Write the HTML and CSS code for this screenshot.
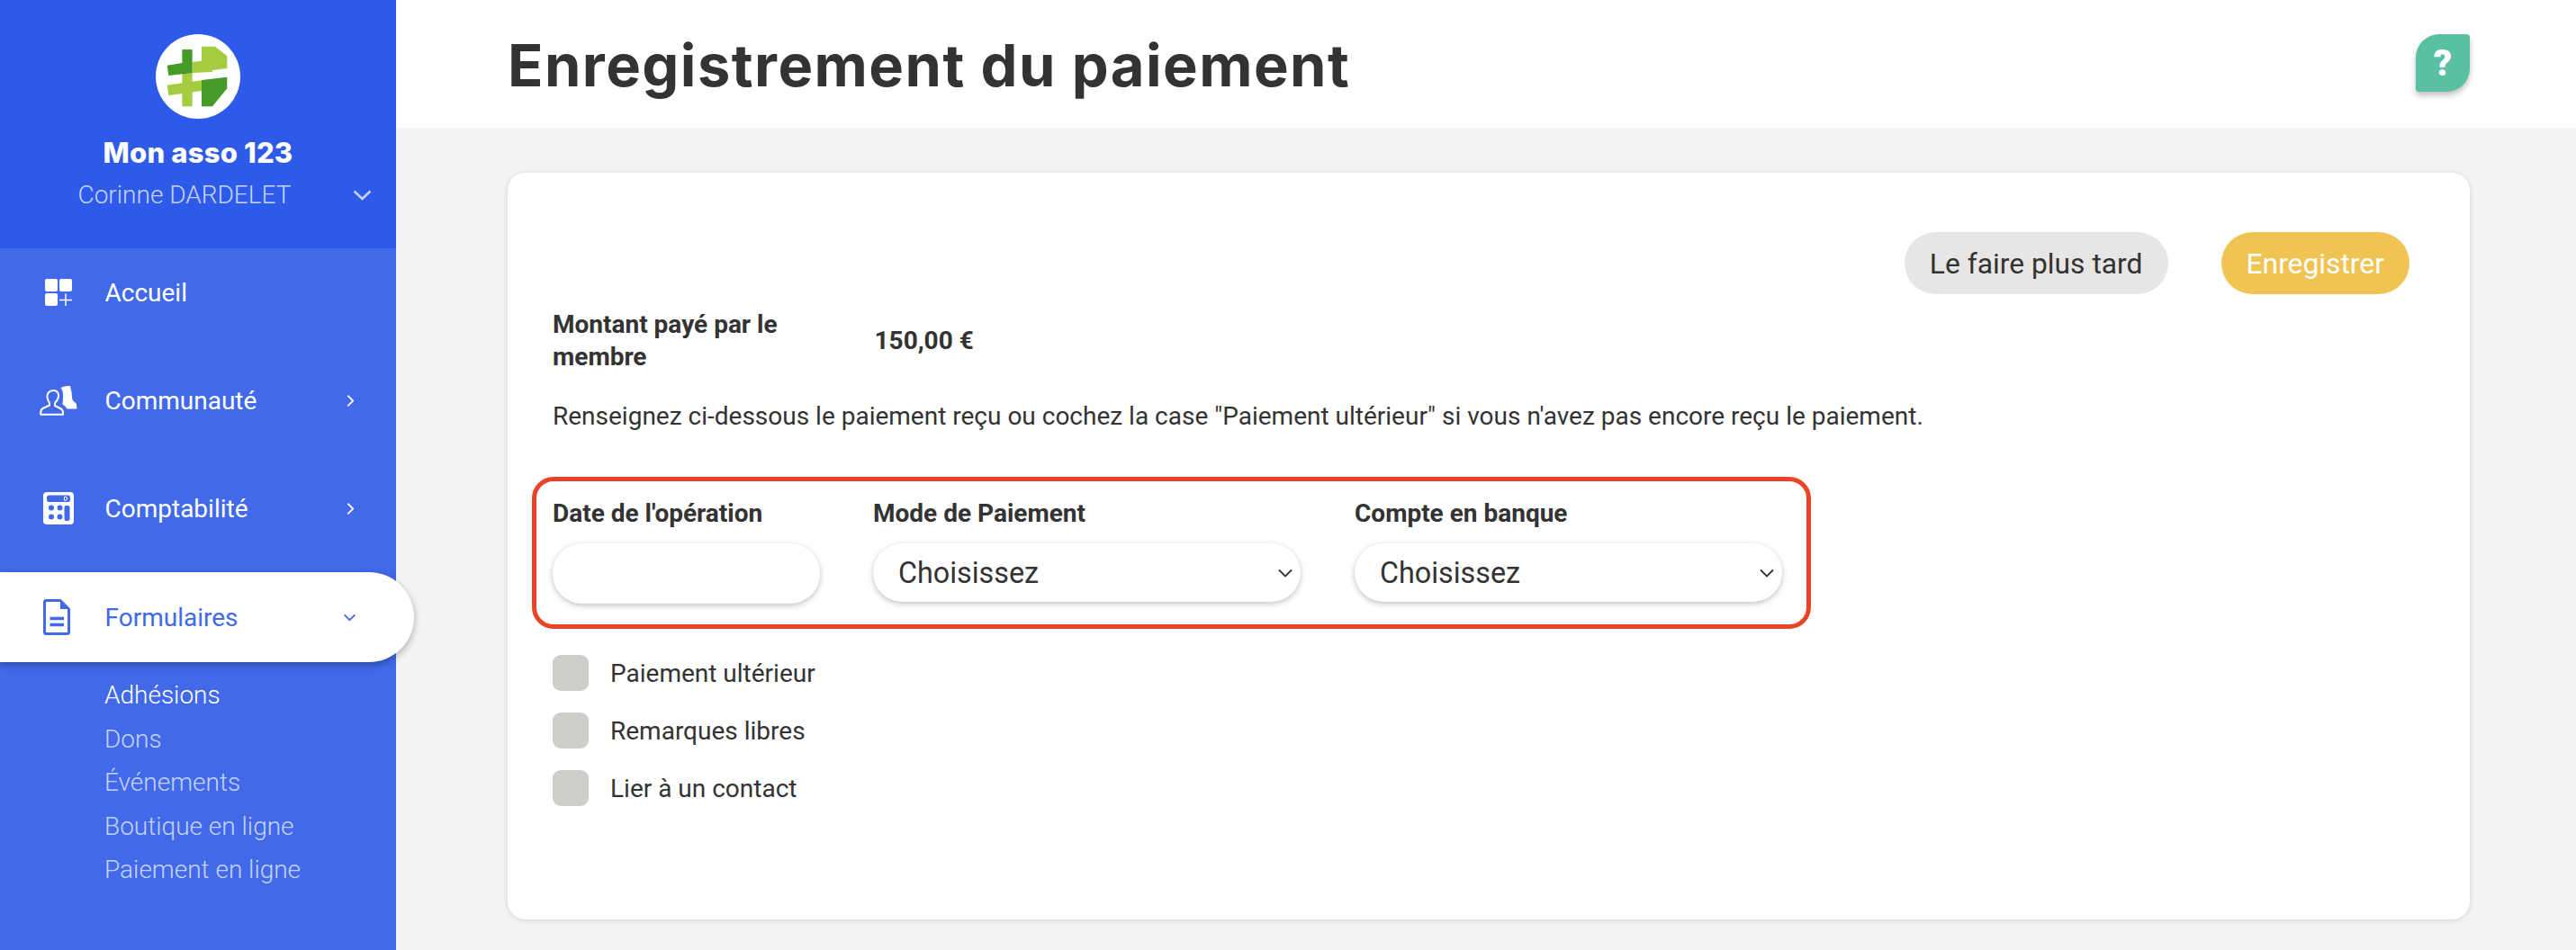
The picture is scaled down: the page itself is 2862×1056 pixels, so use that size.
FILE: index.html
```html
<!DOCTYPE html>
<html lang="fr">
<head>
<meta charset="utf-8">
<title>Enregistrement du paiement</title>
<link rel="stylesheet" href="styles.css">
</head>
<body>
<aside class="sidebar">
  <div class="org">
    <svg class="logo" viewBox="519 114 282 282" aria-hidden="true">
      <circle cx="660" cy="255" r="141" fill="#fff"/>
      <path fill="#a5cb3f" d="M641 207L672 203V155H717L757 187V228L708 234V240L641 243ZM557 284L607 277V243H641V272L672 268V303L641 307V355H607V312L562 318Z"/>
      <path fill="#469a28" d="M607 165H641V243L562 252L557 218L607 210ZM672 267L757 257V295L708 355H672Z"/>
    </svg>
    <div class="org-name">Mon asso 123</div>
    <div class="org-user">
      <span>Corinne DARDELET</span>
      <svg class="org-chevron" viewBox="0 0 20 12" aria-hidden="true"><path d="M1 1.500L10 10L19 1.500"/></svg>
    </div>
  </div>
  <nav class="menu">
    <a class="menu-item">
      <svg class="menu-icon" viewBox="-6 -6 42 42" aria-hidden="true">
        <rect x="0" y="0" width="14" height="14" rx="2" fill="#fff"/>
        <rect x="16" y="0" width="14" height="14" rx="2" fill="#fff"/>
        <rect x="0" y="16" width="14" height="14" rx="2" fill="#fff"/>
        <path d="M23 16.500V30M16 23.500H30" stroke="#fff" stroke-width="1.500" fill="none"/>
      </svg>
      <span class="menu-label">Accueil</span>
    </a>
    <a class="menu-item">
      <svg class="menu-icon" viewBox="0 -5 42 42" aria-hidden="true">
        <path fill="#fff" d="M23.500 2Q28 -.5 34 0Q36 7 36 13Q36.500 17 40.500 19Q41.500 22 41.500 25.500H30.500Q29.500 23 25.500 20.500Q26 16 26 10Q26 5 23.500 2Z"/>
        <path fill="none" stroke="#fff" stroke-width="2" stroke-linejoin="round" d="M15.500 5C10.500 5 8 8.500 8.500 12.500C9 15.500 9.500 17 11 19V21.500L3.500 25C1.500 26 1.200 27.500 1.200 30V31.800H26V29.500C26 27 25 26 23 25L17 22V19C19 17 20.500 15 21 12C21.500 8 19.500 5 15.500 5Z"/>
      </svg>
      <span class="menu-label">Communauté</span>
      <svg class="menu-chevron" viewBox="0 0 10 16" aria-hidden="true"><path d="M1.500 1.500L8 8L1.500 14.500"/></svg>
    </a>
    <a class="menu-item">
      <svg class="menu-icon" viewBox="-2 -3 42 42" aria-hidden="true">
        <path fill="#fff" fill-rule="evenodd" d="M6 0H32Q36 0 36 4V32Q36 36 32 36H6Q2 36 2 32V4Q2 0 6 0ZM8.500 3.500Q6 3.500 6 6V8.500Q6 11 8.500 11H30Q32 11 32 8.500V6Q32 3.500 30 3.500ZM11 14.500A3 3 0 1 0 11 20.500A3 3 0 1 0 11 14.500ZM20.500 14.500A3 3 0 1 0 20.500 20.500A3 3 0 1 0 20.500 14.500ZM11 24.500A3 3 0 1 0 11 30.500A3 3 0 1 0 11 24.500ZM20.500 24.500A3 3 0 1 0 20.500 30.500A3 3 0 1 0 20.500 24.500ZM27.500 15Q25.500 15 25.500 17V30Q25.500 32 27.500 32H29.500Q31.500 32 31.500 30V17Q31.500 15 29.500 15Z"/>
        <path fill="none" stroke="#fff" stroke-width="1" d="M25.500 5.200V9.200H27Q28.700 9.200 28.700 7.200Q28.700 5.200 27 5.200Z"/>
      </svg>
      <span class="menu-label">Comptabilité</span>
      <svg class="menu-chevron" viewBox="0 0 10 16" aria-hidden="true"><path d="M1.500 1.500L8 8L1.500 14.500"/></svg>
    </a>
    <a class="menu-item menu-item-active">
      <svg class="menu-icon menu-icon-doc" viewBox="0 0 30 40" aria-hidden="true">
        <path fill="none" stroke="#4169e9" stroke-width="3" stroke-linejoin="round" d="M3.500 1.500H19L28.500 11V36.500Q28.500 38.500 26.500 38.500H3.500Q1.500 38.500 1.500 36.500V3.500Q1.500 1.500 3.500 1.500Z"/>
        <path fill="#4169e9" d="M19 1.500V11H28.500Z"/>
        <path stroke="#4169e9" stroke-width="3.500" d="M7.500 21.500H23M7.500 28.500H23"/>
      </svg>
      <span class="menu-label">Formulaires</span>
      <svg class="menu-chevron-down" viewBox="0 0 16 10" aria-hidden="true"><path d="M1.500 1.500L8 8L14.500 1.500"/></svg>
    </a>
  </nav>
  <ul class="submenu">
    <li class="submenu-current">Adhésions</li>
    <li>Dons</li>
    <li>Événements</li>
    <li>Boutique en ligne</li>
    <li>Paiement en ligne</li>
  </ul>
</aside>
<main class="main">
  <header class="topbar">
    <h1 class="title">Enregistrement du paiement</h1>
    <button class="help" type="button">?</button>
  </header>
  <div class="content">
    <section class="card">
      <div class="actions">
        <button class="btn btn-later" type="button">Le faire plus tard</button>
        <button class="btn btn-save" type="button">Enregistrer</button>
      </div>
      <div class="amount">
        <div class="amount-label">Montant payé par le membre</div>
        <div class="amount-value">150,00 €</div>
      </div>
      <p class="intro">Renseignez ci-dessous le paiement reçu ou cochez la case "Paiement ultérieur" si vous n'avez pas encore reçu le paiement.</p>
      <div class="fields">
        <div class="field field-date">
          <div class="field-label">Date de l'opération</div>
          <div class="control control-date"></div>
        </div>
        <div class="field field-select">
          <div class="field-label">Mode de Paiement</div>
          <div class="control">
            <span>Choisissez</span>
            <svg class="select-chevron" viewBox="0 0 16 10" aria-hidden="true"><path d="M1 1.500L8 8.500L15 1.500"/></svg>
          </div>
        </div>
        <div class="field field-select">
          <div class="field-label">Compte en banque</div>
          <div class="control">
            <span>Choisissez</span>
            <svg class="select-chevron" viewBox="0 0 16 10" aria-hidden="true"><path d="M1 1.500L8 8.500L15 1.500"/></svg>
          </div>
        </div>
      </div>
      <div class="checks">
        <div class="check"><span class="box"></span>Paiement ultérieur</div>
        <div class="check"><span class="box"></span>Remarques libres</div>
        <div class="check"><span class="box"></span>Lier à un contact</div>
      </div>
    </section>
  </div>
</main>
</body>
</html>
```
FILE: styles.css
```css
* { box-sizing: border-box; }
html, body { margin: 0; height: 100%; }
body {
  display: flex;
  height: 1056px;
  overflow: hidden;
  background: #f4f4f4;
  color: #333;
  font-family: Roboto, "Liberation Sans", sans-serif;
}

/* Sidebar */
.sidebar {
  flex: 0 0 440px;
  width: 440px;
  min-width: 0;
  background: #4169e9;
  position: relative;
  z-index: 1;
}
.org {
  height: 276px;
  background: #2d5ae9;
  display: flex;
  flex-direction: column;
  align-items: center;
  padding-top: 38px;
}
.logo { width: 94px; height: 94px; display: block; }
.org-name {
  margin-top: 18px;
  font-family: Inter, "Liberation Sans", sans-serif;
  font-weight: 800;
  font-size: 31px;
  letter-spacing: .2px;
  line-height: 40px;
  color: #fff;
}
.org-user {
  align-self: stretch;
  position: relative;
  margin-top: 9px;
  text-align: center;
  font-weight: 300;
  font-size: 28px;
  line-height: 36px;
  color: #c6d3f8;
  padding-right: 30px;
}
.org-chevron {
  position: absolute;
  right: 27px;
  top: 12px;
  width: 21px;
  height: 12px;
  fill: none;
  stroke: #c6d3f8;
  stroke-width: 2.500;
}
.menu { display: flex; flex-direction: column; gap: 22px; }
.menu-item {
  display: flex;
  align-items: center;
  flex: none;
  width: 440px;
  height: 98px;
  padding-left: 44px;
  color: #fff;
  font-size: 28px;
}
.menu-icon {
  width: 42px;
  height: 42px;
  flex: none;
  margin-right: 30.500px;
  overflow: visible;
}
.menu-icon-doc { width: 30px; height: 40px; margin-left: 4px; margin-right: 38.500px; }
.menu-label { flex: 1; }
.menu-chevron {
  width: 9px;
  height: 15px;
  margin-right: 46px;
  fill: none;
  stroke: #fff;
  stroke-width: 2;
}
.menu-item-active {
  height: 100px;
  width: 460px;
  background: #fff;
  color: #4169e9;
  border-radius: 0 50px 50px 0;
  box-shadow: 0 3px 8px rgba(0, 0, 0, .3);
}
.menu-chevron-down {
  width: 15px;
  height: 9px;
  margin-right: 64px;
  fill: none;
  stroke: #4169e9;
  stroke-width: 2;
}
.submenu {
  list-style: none;
  margin: 13px 0 0;
  padding: 0 0 0 116px;
  font-weight: 300;
  font-size: 28px;
  line-height: 48.500px;
  color: #c6d3f8;
}
.submenu-current { color: #fff; }

/* Main */
.main { flex: 1; min-width: 0; display: flex; flex-direction: column; }
.topbar {
  height: 142px;
  background: #fff;
  padding: 38px 118px 0 124px;
  display: flex;
  justify-content: space-between;
  align-items: flex-start;
}
.title {
  margin: 0;
  font-family: Inter, "Liberation Sans", sans-serif;
  font-weight: 700;
  font-size: 65px;
  letter-spacing: 1.450px;
  line-height: 70px;
  color: #333;
}
.help {
  width: 60px;
  height: 64px;
  padding: 0;
  border: 0;
  background: #5abfa3;
  color: #fff;
  font-family: Roboto, sans-serif;
  font-weight: 900;
  font-size: 40px;
  border-radius: 26px 4px 26px 4px;
  box-shadow: 0 4px 6px rgba(0, 0, 0, .25);
}
.content { padding: 50px 118px 0 124px; }
.card {
  height: 830px;
  background: #fff;
  border-radius: 20px;
  box-shadow: 0 1px 6px rgba(0, 0, 0, .14);
  padding: 66px 67px 0 50px;
}
.actions { display: flex; justify-content: flex-end; gap: 59px; }
.btn {
  height: 69px;
  border: 0;
  border-radius: 35px;
  padding: 0 28px;
  font-family: Roboto, sans-serif;
  font-size: 31.800px;
}
.btn-later { background: #e7e6e4; color: #333; }
.btn-save { background: #efc452; color: #fff; }

.amount {
  display: flex;
  align-items: center;
  margin-top: 16px;
  font-weight: 700;
  font-size: 28px;
  line-height: 36px;
}
.amount-label { width: 357.500px; padding-right: 90px; }
.intro {
  margin: 30px 0 0;
  font-size: 28px;
  line-height: 36px;
}
.fields {
  display: flex;
  width: 1421px;
  height: 169px;
  margin: 49px 0 0 -23px;
  padding: 18px 0 0 18px;
  border: 5px solid #ea4327;
  border-radius: 24px;
}
.field { flex: none; }
.field-date { width: 356px; }
.field-select { width: 475px; margin-right: 60px; }
.field-select:last-child { margin-right: 0; }
.field-label { font-weight: 700; font-size: 28px; line-height: 36px; }
.control {
  height: 65px;
  margin-top: 15px;
  background: #fff;
  border-radius: 33px;
  box-shadow: 0 2px 6px rgba(0, 0, 0, .25);
  padding: 0 9px 0 28px;
  display: flex;
  align-items: center;
  justify-content: space-between;
  font-size: 32.300px;
}
.control-date { width: 297px; height: 67px; }
.select-chevron {
  width: 16px;
  height: 10px;
  fill: none;
  stroke: #333;
  stroke-width: 1.800;
}
.checks { margin-top: 29px; }
.check {
  display: flex;
  align-items: center;
  gap: 24px;
  height: 40px;
  margin-bottom: 24px;
  font-size: 28px;
}
.box {
  width: 40px;
  height: 40px;
  border-radius: 9px;
  background: #cfcdc9;
}
```
